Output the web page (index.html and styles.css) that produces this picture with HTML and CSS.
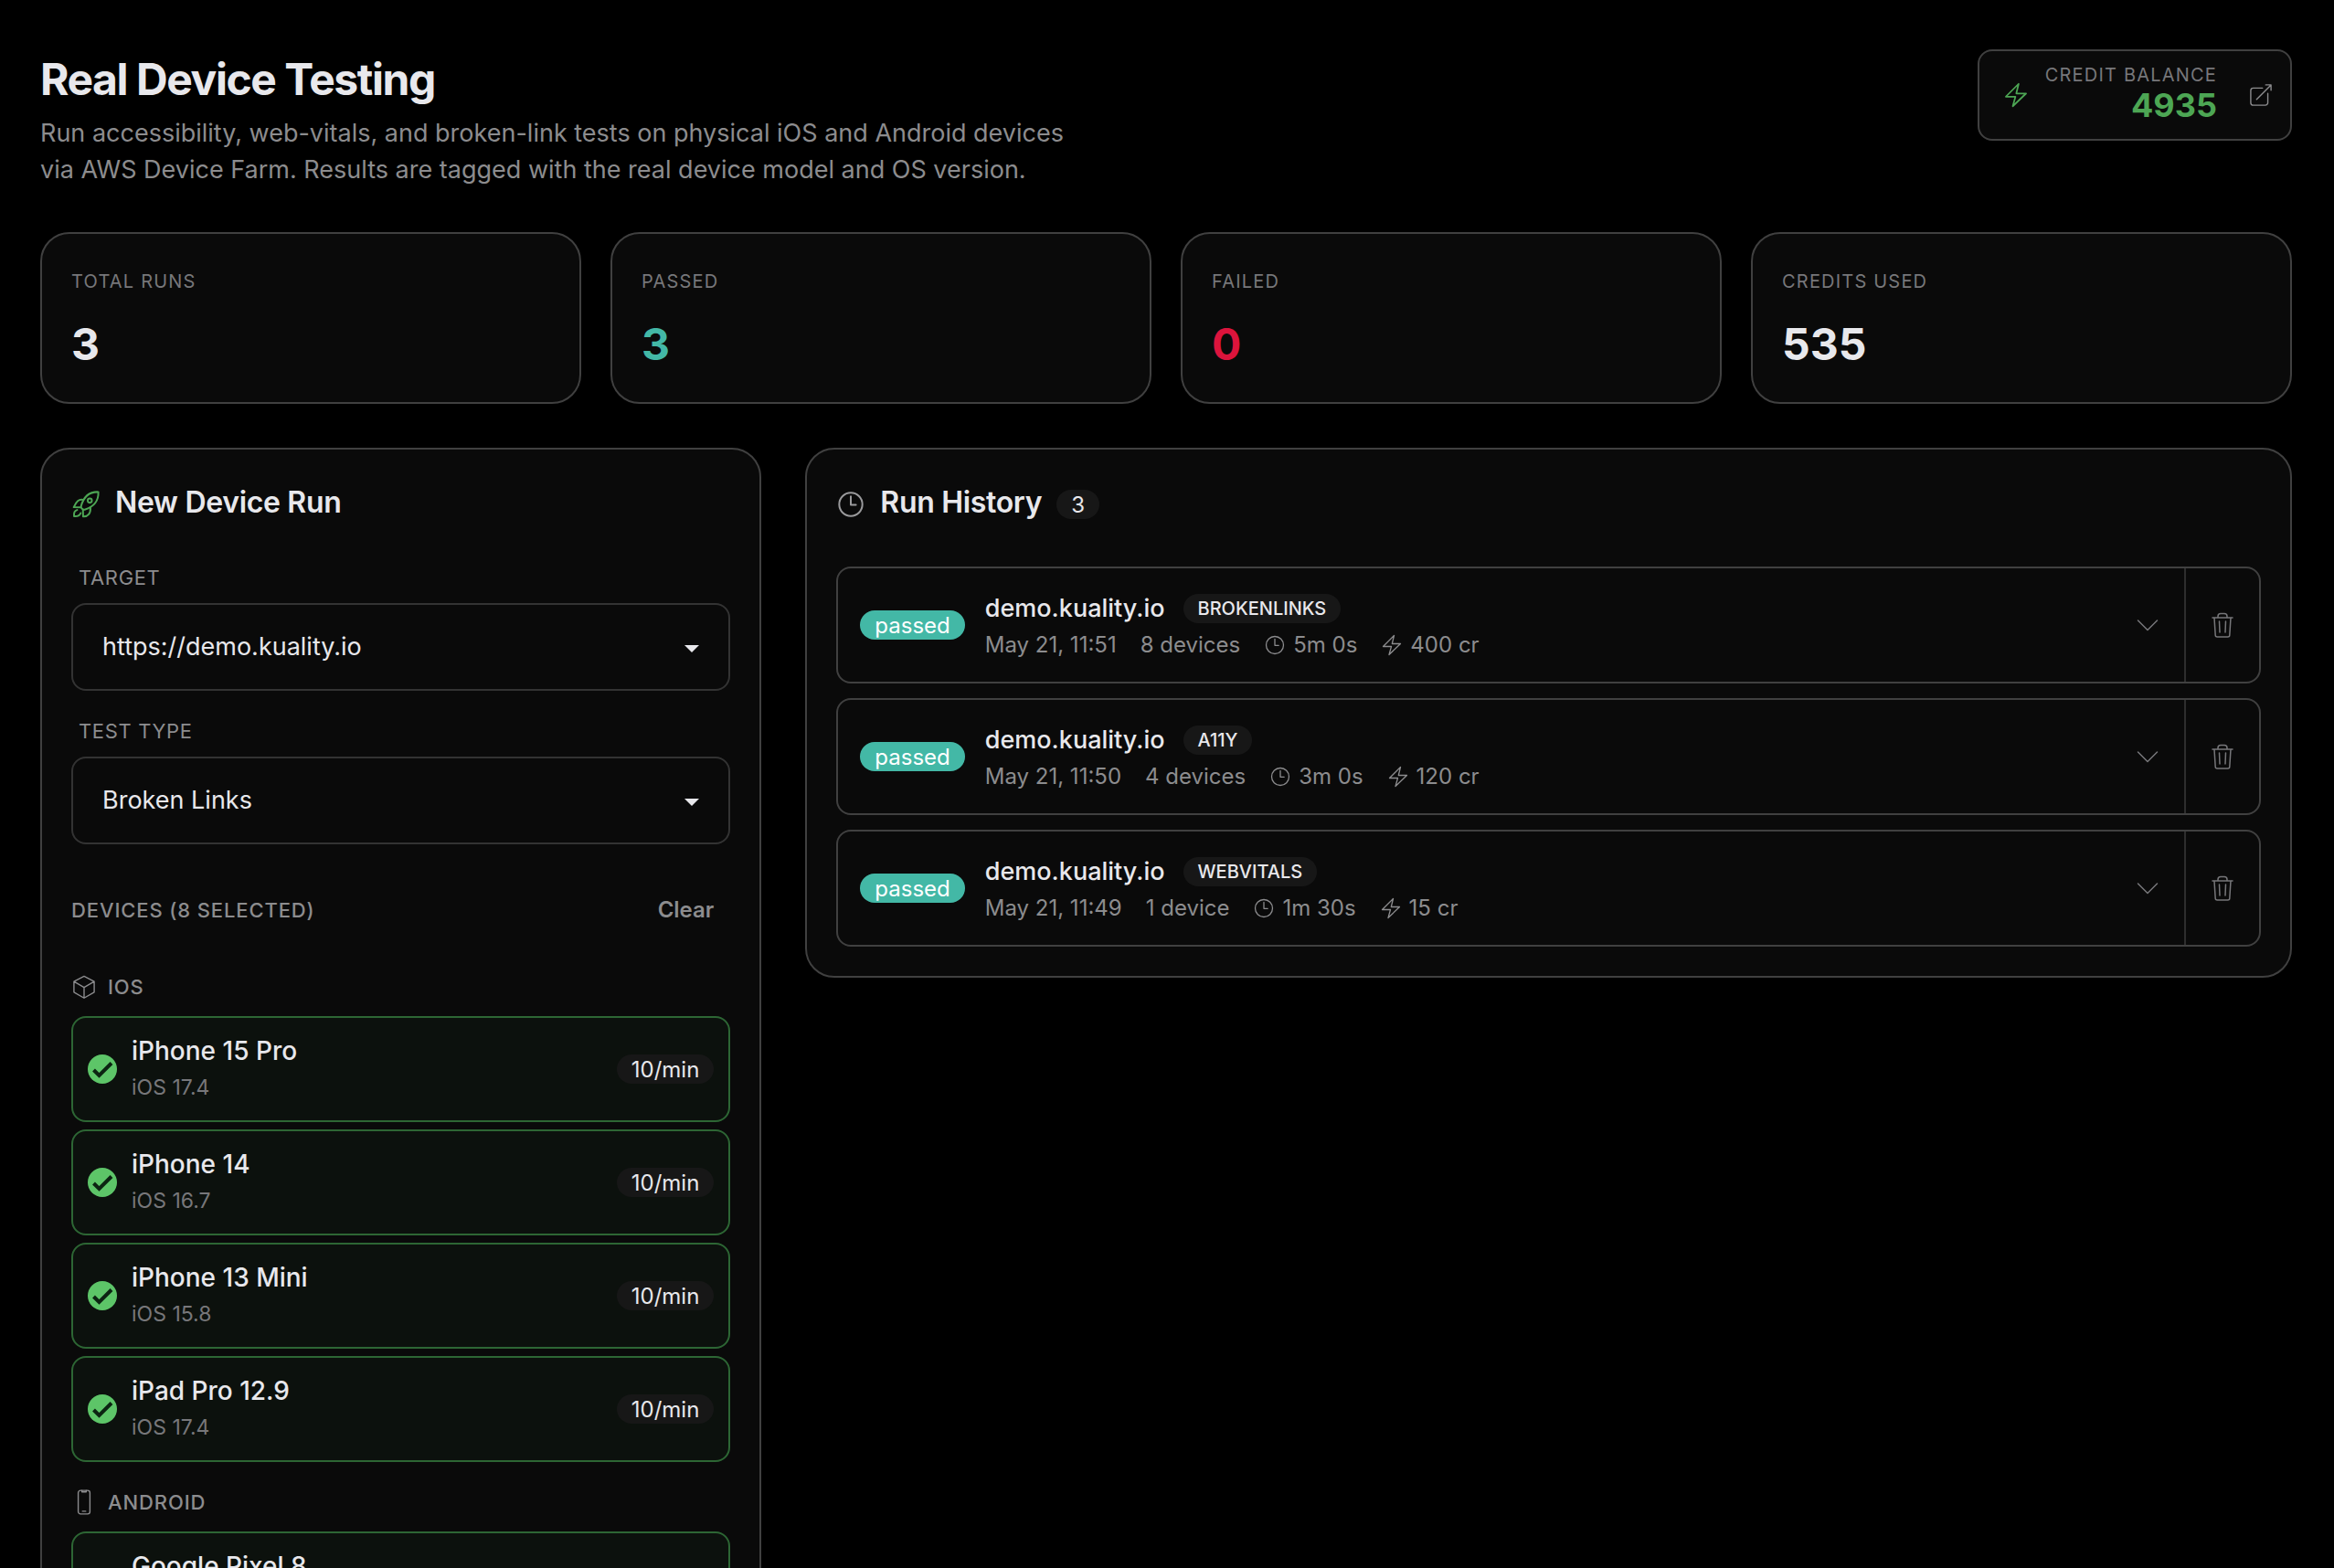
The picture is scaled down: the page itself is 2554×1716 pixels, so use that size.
FILE: index.html
```html
<!DOCTYPE html>
<html lang="en">
<head>
<meta charset="utf-8">
<meta name="viewport" content="width=device-width, initial-scale=1">
<title>Real Device Testing</title>
<link rel="stylesheet" href="styles.css">
</head>
<body>
<svg class="sprite" aria-hidden="true">
  <symbol id="i-bolt" viewBox="0 0 24 24"><path d="m2.500 13.500 12-12L12.300 10.500h9.200l-12.500 12L11.500 13.500Z"/></symbol>
  <symbol id="i-clock" viewBox="0 0 24 24"><circle cx="12" cy="12" r="9.5"/><path d="M12 5.500v6.800h4.200"/></symbol>
  <symbol id="i-external" viewBox="0 0 24 24"><path d="M13.500 5.500H4.800A2.300 2.300 0 0 0 2.500 7.800v11.400a2.300 2.300 0 0 0 2.300 2.300h11.400a2.300 2.300 0 0 0 2.300-2.300V10.500M8 16 21.500 2.500M16.500 2.500h5v5"/></symbol>
  <symbol id="i-rocket" viewBox="0 0 24 24"><path d="M22.200 1.800C15.500 1.500 10.500 4.500 8 13.500c-.3 1.500 1.500 3.200 3 2.800C18.500 14 22.500 9.500 22.200 1.800Z"/><circle cx="15.200" cy="8.900" r="1.700"/><path d="M9.800 8.200C6 7.500 4.300 9.500 2 14.300l6 .2M9.600 16.600 9.700 22c4 .3 6.300-2.500 6-7.500M4.800 16.600c-2.300.6-2.800 2.700-2.500 5.100 2.700.2 4.700-.3 5.400-2.600"/></symbol>
  <symbol id="i-cube" viewBox="0 0 24 24"><path d="M12 2 21.500 7v10L12 22.500 2.500 17V7ZM2.500 7l9.500 5.500L21.500 7M12 12.500v10"/></symbol>
  <symbol id="i-phone" viewBox="0 0 24 24"><rect x="6.500" y="1" width="11" height="22" rx="2.200"/><path d="M10 1v1.300h4V1M10.500 20.500h3"/></symbol>
  <symbol id="i-chevron" viewBox="0 0 24 24"><path d="m1.500 7 10.500 10.500L22.500 7"/></symbol>
  <symbol id="i-trash" viewBox="0 0 24 28"><path d="M1 6h22M3 6l1.200 19A2 2 0 0 0 6.200 27h11.600a2 2 0 0 0 2-2L21 6M7 6V4.500A3 3 0 0 1 10 1.500h4a3 3 0 0 1 3 3V6M8.500 10l.5 12M15.500 10 15 22"/></symbol>
</svg>

<main class="page">
  <header class="page-head">
    <div class="intro">
      <h1>Real Device Testing</h1>
      <p>Run accessibility, web-vitals, and broken-link tests on physical iOS and Android devices via AWS Device Farm. Results are tagged with the real device model and OS version.</p>
    </div>
    <a class="credit" href="#credits">
      <svg class="icon icon-28 accent"><use href="#i-bolt"/></svg>
      <span class="credit-text">
        <span class="credit-label">Credit balance</span>
        <strong class="credit-value">4935</strong>
      </span>
      <svg class="icon icon-28 external"><use href="#i-external"/></svg>
    </a>
  </header>

  <section class="stats" aria-label="Summary">
    <div class="card stat"><span class="stat-label">Total runs</span><strong class="stat-value">3</strong></div>
    <div class="card stat"><span class="stat-label">Passed</span><strong class="stat-value ok">3</strong></div>
    <div class="card stat"><span class="stat-label">Failed</span><strong class="stat-value bad">0</strong></div>
    <div class="card stat"><span class="stat-label">Credits used</span><strong class="stat-value">535</strong></div>
  </section>

  <div class="columns">
    <section class="card panel new-run">
      <h2 class="panel-title"><svg class="icon icon-32 accent"><use href="#i-rocket"/></svg>New Device Run</h2>
      <form>
        <div class="field">
          <label for="target">Target</label>
          <select id="target"><option>https://demo.kuality.io</option></select>
        </div>
        <div class="field">
          <label for="type">Test type</label>
          <select id="type"><option>Broken Links</option></select>
        </div>
        <div class="devices-head">
          <span class="caption">Devices (8 selected)</span>
          <button class="clear" type="button">Clear</button>
        </div>
        <h3 class="caption group"><svg class="icon icon-28"><use href="#i-cube"/></svg>iOS</h3>
        <div class="devices">
          <label class="device"><input type="checkbox" checked><span class="device-text"><span class="device-name">iPhone 15 Pro</span><span class="device-os">iOS 17.4</span></span><span class="badge">10/min</span></label>
          <label class="device"><input type="checkbox" checked><span class="device-text"><span class="device-name">iPhone 14</span><span class="device-os">iOS 16.7</span></span><span class="badge">10/min</span></label>
          <label class="device"><input type="checkbox" checked><span class="device-text"><span class="device-name">iPhone 13 Mini</span><span class="device-os">iOS 15.8</span></span><span class="badge">10/min</span></label>
          <label class="device"><input type="checkbox" checked><span class="device-text"><span class="device-name">iPad Pro 12.9</span><span class="device-os">iOS 17.4</span></span><span class="badge">10/min</span></label>
        </div>
        <h3 class="caption group"><svg class="icon icon-28"><use href="#i-phone"/></svg>Android</h3>
        <div class="devices">
          <label class="device"><input type="checkbox" checked><span class="device-text"><span class="device-name">Google Pixel 8</span><span class="device-os">Android 14</span></span><span class="badge">10/min</span></label>
        </div>
      </form>
    </section>

    <section class="card panel history">
      <h2 class="panel-title"><svg class="icon icon-32 muted"><use href="#i-clock"/></svg>Run History<span class="badge">3</span></h2>
      <ul class="runs">
        <li class="run">
          <button class="run-main" type="button">
            <span class="badge status">passed</span>
            <span class="run-text">
              <span class="run-name">demo.kuality.io<span class="badge kind">BROKENLINKS</span></span>
              <span class="run-meta"><span>May 21, 11:51</span><span>8 devices</span><span class="with-icon"><svg class="icon icon-24"><use href="#i-clock"/></svg>5m 0s</span><span class="with-icon"><svg class="icon icon-24"><use href="#i-bolt"/></svg>400 cr</span></span>
            </span>
            <svg class="icon icon-24 chevron"><use href="#i-chevron"/></svg>
          </button>
          <button class="run-delete" type="button" aria-label="Delete run"><svg class="icon icon-trash"><use href="#i-trash"/></svg></button>
        </li>
        <li class="run">
          <button class="run-main" type="button">
            <span class="badge status">passed</span>
            <span class="run-text">
              <span class="run-name">demo.kuality.io<span class="badge kind">A11Y</span></span>
              <span class="run-meta"><span>May 21, 11:50</span><span>4 devices</span><span class="with-icon"><svg class="icon icon-24"><use href="#i-clock"/></svg>3m 0s</span><span class="with-icon"><svg class="icon icon-24"><use href="#i-bolt"/></svg>120 cr</span></span>
            </span>
            <svg class="icon icon-24 chevron"><use href="#i-chevron"/></svg>
          </button>
          <button class="run-delete" type="button" aria-label="Delete run"><svg class="icon icon-trash"><use href="#i-trash"/></svg></button>
        </li>
        <li class="run">
          <button class="run-main" type="button">
            <span class="badge status">passed</span>
            <span class="run-text">
              <span class="run-name">demo.kuality.io<span class="badge kind">WEBVITALS</span></span>
              <span class="run-meta"><span>May 21, 11:49</span><span>1 device</span><span class="with-icon"><svg class="icon icon-24"><use href="#i-clock"/></svg>1m 30s</span><span class="with-icon"><svg class="icon icon-24"><use href="#i-bolt"/></svg>15 cr</span></span>
            </span>
            <svg class="icon icon-24 chevron"><use href="#i-chevron"/></svg>
          </button>
          <button class="run-delete" type="button" aria-label="Delete run"><svg class="icon icon-trash"><use href="#i-trash"/></svg></button>
        </li>
      </ul>
    </section>
  </div>
</main>
</body>
</html>
```
FILE: styles.css
```css
:root {
  --surface: #0a0a0a;
  --border: #404040;
  --border-soft: #2e2e2e;
  --text: #e8e8ec;
  --muted: #8c8c8e;
  --dim: #77777a;
  --green: #4da654;
  --teal: #43b8a6;
  --red: #dc143c;
}

* { box-sizing: border-box; }

html { background: #000; }

body {
  margin: 0;
  background: #000;
  color: var(--text);
  font-family: Inter, "Liberation Sans", sans-serif;
  font-size: 27px;
  line-height: 40px;
}

h1, h2, h3, p, ul { margin: 0; padding: 0; }

button, select, input { font: inherit; color: inherit; }

button { border: 0; padding: 0; background: none; cursor: pointer; }

.sprite { position: absolute; width: 0; height: 0; }

.page { padding: 54px 46px 0 44px; }

.icon {
  flex: none;
  width: 24px;
  height: 24px;
  fill: none;
  stroke: currentColor;
  stroke-width: 1.5;
  stroke-linecap: round;
  stroke-linejoin: round;
}
.icon-28 { width: 28px; height: 28px; }
.icon-32 { width: 32px; height: 32px; }
.accent { color: var(--green); }
.muted { color: #9a9a9c; }

.page-head {
  display: flex;
  justify-content: space-between;
  align-items: flex-start;
  margin-bottom: 48px;
}

.intro { max-width: 1152px; }

h1 {
  padding-top: 3px;
  font-size: 48px;
  font-weight: 700;
  line-height: 60px;
  letter-spacing: -0.03em;
}

.intro p { padding-top: 9px; color: var(--muted); }

.credit {
  display: flex;
  align-items: center;
  gap: 18px;
  height: 100px;
  padding: 0 18px 0 26px;
  border: 2px solid var(--border);
  border-radius: 16px;
  background: var(--surface);
  color: var(--muted);
  text-decoration: none;
}

.credit-text {
  display: flex;
  flex-direction: column;
  align-items: flex-end;
  padding-bottom: 6px;
}
.external { margin-left: 16px; stroke-width: 1.2; }

.credit-label, .stat-label {
  color: var(--dim);
  font-size: 20px;
  line-height: 28px;
  letter-spacing: 0.06em;
  text-transform: uppercase;
}

.credit-value { color: var(--green); font-size: 36px; line-height: 38px; }

.card {
  border: 2px solid var(--border);
  border-radius: 32px;
  background: var(--surface);
}

.stats {
  display: grid;
  grid-template-columns: repeat(4, 1fr);
  gap: 32px;
  margin-bottom: 48px;
}

.stat { display: flex; flex-direction: column; gap: 24px; padding: 38px 32px 32px; }

.stat-value { font-size: 48px; line-height: 62px; }
.ok { color: var(--teal); }
.bad { color: var(--red); }

.columns {
  display: grid;
  grid-template-columns: repeat(12, 1fr);
  gap: 48px;
  align-items: start;
}

.new-run { grid-column: span 4; }
.history { grid-column: span 8; }

.panel { padding: 32px; }

.panel-title {
  display: flex;
  align-items: baseline;
  gap: 16px;
  padding-top: 2px;
  font-size: 32px;
  font-weight: 600;
  line-height: 48px;
  letter-spacing: -0.01em;
}
.panel-title .icon { align-self: center; margin-top: 4px; }

.badge {
  flex: none;
  padding: 2px 16px 0;
  border-radius: 16px;
  background: #171717;
  color: var(--text);
  font-size: 24px;
  font-weight: 400;
  line-height: 30px;
  letter-spacing: normal;
}

.new-run form { padding-top: 38px; }

.field { display: flex; flex-direction: column; gap: 8px; margin-bottom: 24px; }

.field label {
  padding-left: 8px;
  color: var(--muted);
  font-size: 22px;
  line-height: 40px;
  letter-spacing: 0.03em;
  text-transform: uppercase;
}

.field select {
  width: 100%;
  height: 96px;
  padding: 0 32px;
  border: 2px solid #333;
  border-radius: 16px;
  appearance: none;
  background: var(--surface) url("data:image/svg+xml,%3Csvg xmlns='http://www.w3.org/2000/svg' viewBox='0 0 16 8'%3E%3Cpath d='M0 0h16l-8 8z' fill='%23e8e8ec'/%3E%3C/svg%3E") no-repeat right 32px top 44px / 16px 8px;
}

.devices-head {
  display: flex;
  justify-content: space-between;
  align-items: center;
  height: 64px;
  margin: 40px 0 8px;
  padding-right: 18px;
}

.caption {
  color: var(--muted);
  font-size: 22px;
  font-weight: 500;
  line-height: 32px;
  letter-spacing: 0.04em;
  text-transform: uppercase;
}

.clear { color: var(--muted); font-size: 24px; font-weight: 600; }

.group { display: flex; align-items: center; gap: 12px; padding: 28px 0 16px; }
.group .icon { stroke-width: 1.2; }

.devices { display: flex; flex-direction: column; gap: 8px; }

.device {
  display: flex;
  align-items: center;
  gap: 16px;
  height: 116px;
  padding: 0 16px;
  border: 2px solid #2d6634;
  border-radius: 16px;
  background: #0c110d;
}

.device input {
  flex: none;
  width: 32px;
  height: 32px;
  margin: 0;
  border-radius: 50%;
  appearance: none;
  background: #5dc568 url("data:image/svg+xml,%3Csvg xmlns='http://www.w3.org/2000/svg' viewBox='0 0 32 32'%3E%3Cpath d='m6.500 17 6 6L26 9.500' fill='none' stroke='%230c2412' stroke-width='4'/%3E%3C/svg%3E") center / 32px 32px;
}

.device-text { display: flex; flex: 1; flex-direction: column; }
.device-name { font-size: 28px; font-weight: 500; }
.device-os { color: var(--dim); font-size: 23px; }

.runs { display: flex; flex-direction: column; gap: 16px; padding-top: 46px; list-style: none; }

.run {
  display: flex;
  height: 128px;
  border: 2px solid var(--border);
  border-radius: 16px;
}

.run-main {
  display: flex;
  flex: 1;
  align-items: center;
  gap: 22px;
  padding: 0 28px 0 24px;
  text-align: left;
}

.status { background: var(--teal); color: #fff; }
.run-text { display: flex; flex: 1; flex-direction: column; padding-top: 4px; }
.run-name { display: flex; align-items: center; gap: 20px; font-weight: 500; }
.kind { padding-top: 1px; font-size: 20px; font-weight: 500; line-height: 31px; }

.run-meta { display: flex; gap: 26px; color: var(--muted); font-size: 24px; }
.with-icon { display: flex; align-items: center; gap: 8px; }
.with-icon .icon { stroke-width: 1.3; }
.chevron { color: var(--dim); }

.run-delete {
  display: grid;
  place-items: center;
  width: 82px;
  border-left: 2px solid var(--border-soft);
  color: var(--dim);
}
.icon-trash { height: 28px; }
```
